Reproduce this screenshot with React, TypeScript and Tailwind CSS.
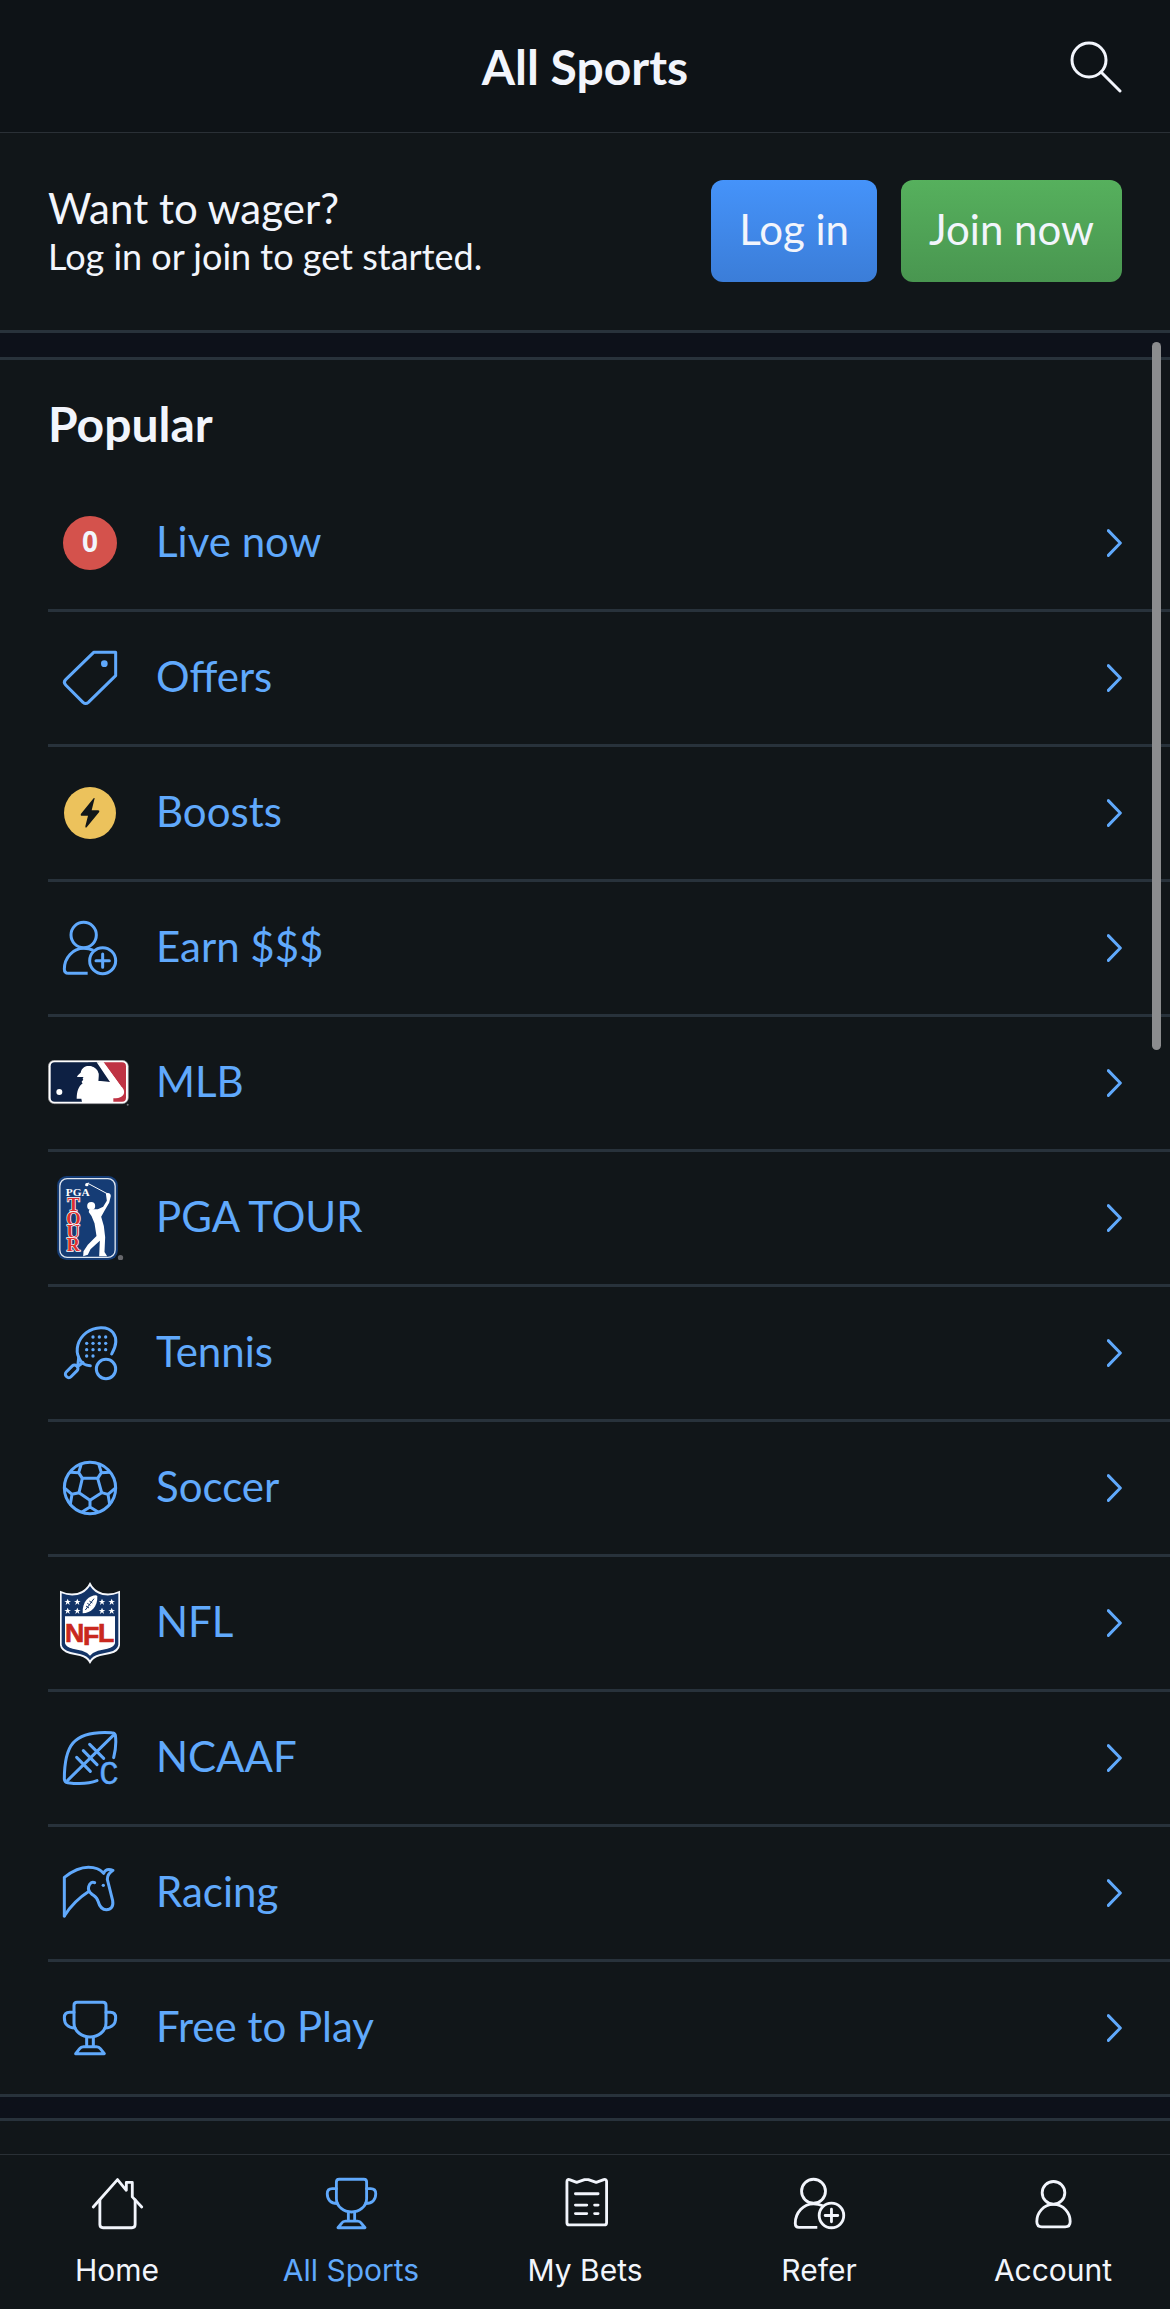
import type { ReactNode } from 'react'

type IconProps = { className?: string }

function LineIcon({ className = 'size-[54px]', children }: IconProps & { children: ReactNode }) {
  return (
    <svg
      viewBox="0 0 162 162"
      className={`overflow-visible ${className}`}
      fill="none"
      stroke="currentColor"
      strokeWidth="9"
      strokeLinecap="round"
      strokeLinejoin="round"
      aria-hidden="true"
    >
      {children}
    </svg>
  )
}

function LiveBadge() {
  return (
    <span className="flex size-[54px] items-center justify-center rounded-full bg-[#d4524c] pb-1 font-['Open_Sans',sans-serif] text-[28px] leading-none font-bold text-[#f2f5fc]">
      0
    </span>
  )
}

function TagIcon() {
  return (
    <LineIcon>
      <path d="M92 4H158V74L76 154Q68 161 60 154L8 102Q0 94 8 86Z" />
      <circle cx="124" cy="38" r="10" fill="currentColor" stroke="none" />
    </LineIcon>
  )
}

function BoostIcon() {
  return (
    <svg viewBox="0 0 162 162" className="size-[54px]" aria-hidden="true">
      <circle cx="81" cy="81" r="78" fill="#ecc25c" />
      <path d="M95 37Q93 35 90 39L54 83Q51 89 57 89H75L67 121Q67 127 71 124L108 79Q111 73 105 73H86Z" fill="#111619" />
    </svg>
  )
}

function ReferIcon({ className }: IconProps) {
  return (
    <LineIcon className={className}>
      <circle cx="62" cy="42" r="38" />
      <path d="M74 157H16Q4 157 4 144C4 110 30 82 62 82Q78 82 91 88" strokeLinecap="butt" />
      <circle cx="119" cy="119" r="39" />
      <path d="M119 99V139M99 119H139" />
    </LineIcon>
  )
}

function MlbLogo() {
  return (
    <svg viewBox="0 0 252 138" className="h-[46px] w-[84px]" aria-hidden="true">
      <rect x="1" y="1" width="240" height="130" rx="18" fill="#fff" stroke="#8b8b90" strokeWidth="2" />
      <path d="M20 7H160V125H20Q8 125 8 113V19Q8 7 20 7Z" fill="#0d2043" />
      <path d="M160 7H222Q234 7 234 19V113Q234 125 222 125H160Z" fill="#bf3344" />
      <path
        d="M146 7H166L218 78C231 88 231 102 222 109C216 114 206 115 196 115V126H102L100 116H86C86 95 92 78 104 70C99 67 101 62 106 60C103 56 104 54 107 52C100 49 93 52 87 51C89 43 95 42 98 38C101 22 114 17 125 18C142 20 151 31 152 44L151 63C164 60 178 61 188 67Z"
        fill="#fff"
      />
      <path d="M152 7L188 66L151 62L152 40L120 8Z" fill="#0d2043" />
      <path d="M125 18C142 20 151 31 152 44L151 64H110V22Z" fill="#fff" />
      <path d="M146 7H167L219 79L196 92L186 66Z" fill="#fff" />
      <circle cx="34" cy="96" r="9" fill="#fff" />
      <circle cx="239" cy="134" r="3" fill="#77777c" />
    </svg>
  )
}

function PgaLogo() {
  return (
    <svg viewBox="0 0 200 252" className="h-[84px] w-[67px]" aria-hidden="true">
      <rect width="182" height="252" rx="28" fill="#153c75" />
      <rect x="8" y="8" width="166" height="236" rx="22" fill="none" stroke="#dfe6f0" strokeWidth="4" />
      <text x="26" y="59" fontFamily="Liberation Serif, serif" fontWeight="700" fontSize="34" fill="#fff">
        PGA
      </text>
      <text
        fontFamily="Liberation Serif, serif"
        fontWeight="700"
        fontSize="56"
        fill="#dc3030"
        stroke="#fff"
        strokeWidth="4"
        paintOrder="stroke"
        x="30 27 28 28"
        y="106 146 186 226"
      >
        TOUR
      </text>
      <path d="M86 28L94 20M92 22L152 54" stroke="#fff" strokeWidth="3" />
      <circle cx="89" cy="26" r="5" fill="#fff" />
      <path
        d="M146 52Q160 48 161 60L156 80L142 104L132 122L140 150L144 184L142 228L150 241H126L128 194L100 220L92 236L78 241L79 226L92 206L118 180L112 142L103 120L95 109Q94 99 104 100L122 100L138 92L149 74Z"
        fill="#fff"
      />
      <circle cx="102" cy="90" r="12" fill="#fff" />
      <circle cx="190" cy="245" r="8" fill="#66666a" />
    </svg>
  )
}

const racketDots = [
  [90, 33], [109, 33], [128, 33],
  [71, 52], [90, 52], [109, 52], [128, 52],
  [71, 71], [90, 71], [109, 71], [128, 71],
  [71, 90], [90, 90],
]

function TennisIcon() {
  return (
    <LineIcon>
      <path d="M146 84C160 60 162 36 150 20C134 -2 94 2 70 20C44 40 36 72 48 96C54 110 66 119 82 119" />
      <path d="M47 96L44 122M44 122L60 110" />
      <rect x="-22" y="-10" width="44" height="20" rx="9" transform="translate(26 136) rotate(-45)" />
      <circle cx="129" cy="129" r="29" />
      {racketDots.map(([x, y]) => (
        <circle key={`${x}-${y}`} cx={x} cy={y} r="5" fill="currentColor" stroke="none" />
      ))}
    </LineIcon>
  )
}

function SoccerIcon() {
  return (
    <LineIcon>
      <circle cx="81" cy="81" r="77" />
      <path d="M58 52H104L116 95L81 118L48 95Z" />
      <path d="M58 52L47 35M47 35L54 12M47 35L22 34M104 52L115 35M115 35L108 12M115 35L140 34" />
      <path d="M48 95L27 100M27 100L6 82M27 100L22 130M116 95L135 100M135 100L156 82M135 100L140 130" />
      <path d="M81 118V138M81 138L58 152M81 138L104 152" />
    </LineIcon>
  )
}

const star = 'M0 -10L3 -3L10 -3L4 1L6 9L0 4L-6 9L-4 1L-10 -3L-3 -3Z'
const starSpots = [[23, 60], [52, 60], [126, 60], [155, 60], [23, 87], [52, 87], [126, 87], [155, 87]]

function NflLogo() {
  return (
    <svg viewBox="0 0 180 246" className="h-[82px] w-[60px]" aria-hidden="true">
      <path
        d="M90 0Q102 26 128 33Q156 38 180 26V190Q178 210 150 216L120 222Q98 228 90 246Q82 228 60 222L30 216Q2 208 0 190V26Q24 38 52 33Q78 26 90 0Z"
        fill="#f5f7fb"
      />
      <path
        d="M90 12Q104 34 128 39Q154 43 175 34V188Q173 204 148 210L118 217Q98 222 90 235Q82 222 62 217L32 210Q7 203 5 188V34Q26 43 52 39Q76 34 90 12Z"
        fill="#133467"
      />
      <path d="M15 103H165V184Q162 196 142 200L114 206Q98 211 90 221Q82 211 66 206L38 200Q18 196 15 184Z" fill="#fff" />
      {starSpots.map(([x, y]) => (
        <path key={`${x}-${y}`} d={star} fill="#fff" transform={`translate(${x} ${y})`} />
      ))}
      <path d="M108 40C88 40 66 58 68 94C92 94 114 74 112 42Z" fill="#fff" />
      <path d="M76 84L102 50M82 64L91 70M88 57L97 63M78 72L87 78" stroke="#133467" strokeWidth="3" />
      <text
        x="15 69 114"
        y="180 190 180"
        fontFamily="Liberation Sans, sans-serif"
        fontWeight="700"
        fontSize="80"
        fill="#c9281f"
        stroke="#c9281f"
        strokeWidth="2"
      >
        NFL
      </text>
    </svg>
  )
}

function NcaafIcon() {
  return (
    <LineIcon>
      <path d="M152 80C158 56 160 32 157 12Q154 5 146 5C100 2 54 8 30 36C8 62 4 100 4 144Q5 154 14 155C50 160 84 156 102 149" />
      <path d="M14 148L150 14M80 40L122 82M61 59L102 101M41 79L82 121" />
      <text
        x="138"
        y="160"
        textAnchor="middle"
        fontFamily="Liberation Mono, monospace"
        fontSize="98"
        fill="currentColor"
        strokeWidth="1"
      >
        C
      </text>
    </LineIcon>
  )
}

function HorseIcon() {
  return (
    <LineIcon>
      <path d="M4 150V34C30 14 56 4 76 4C96 4 112 10 122 22C126 12 136 8 150 13C139 20 133 26 133 40L149 104C152 122 144 131 130 131C116 131 110 122 106 108C102 92 96 92 86 84C78 78 75 70 77 62C80 50 88 46 95 50" />
      <path d="M78 76C50 94 24 118 4 150" />
      <circle cx="121" cy="58" r="5" fill="currentColor" stroke="none" />
    </LineIcon>
  )
}

function TrophyIcon({ className }: IconProps) {
  return (
    <LineIcon className={className}>
      <path d="M42 4H120Q129 4 129 13V66C129 92 104 108 81 108C58 108 33 92 33 66V13Q33 4 42 4Z" />
      <path d="M33 34H20Q4 34 4 50C4 68 14 81 36 81M129 34H142Q158 34 158 50C158 68 148 81 126 81" />
      <path d="M71 108V136M91 108V136M38 158L50 143Q54 137 62 137H100Q108 137 112 143L124 158Z" />
    </LineIcon>
  )
}

function HomeIcon({ className }: IconProps) {
  return (
    <LineIcon className={className}>
      <path d="M4 92L81 5L109 39V14H128V60L158 92" />
      <path d="M25 70V148Q25 158 35 158H127Q137 158 137 148V70" />
    </LineIcon>
  )
}

function ReceiptIcon({ className }: IconProps) {
  return (
    <LineIcon className={className}>
      <path d="M22 12Q22 2 32 6L53 14L78 5L90 5L115 14L139 5Q148 3 148 12V142Q148 149 141 149H29Q22 149 22 142Z" />
      <path d="M49 50H121M49 86H85M110 86H121M49 113H85M110 113H121" />
    </LineIcon>
  )
}

function AccountIcon({ className }: IconProps) {
  return (
    <LineIcon className={className}>
      <circle cx="81" cy="47" r="36" />
      <path d="M81 84C48 84 28 112 28 138Q28 155 44 155H118Q134 155 134 138C134 112 114 84 81 84Z" />
    </LineIcon>
  )
}

function Chevron() {
  return (
    <svg viewBox="0 0 45 84" className="h-7 w-[15px] shrink-0" fill="none" stroke="currentColor" strokeWidth="9" strokeLinecap="round" strokeLinejoin="round" aria-hidden="true">
      <path d="M4 5L40 42L4 79" />
    </svg>
  )
}

const popular = [
  { label: 'Live now', icon: <LiveBadge /> },
  { label: 'Offers', icon: <TagIcon /> },
  { label: 'Boosts', icon: <BoostIcon /> },
  { label: 'Earn $$$', icon: <ReferIcon /> },
  { label: 'MLB', icon: <MlbLogo /> },
  { label: 'PGA TOUR', icon: <PgaLogo /> },
  { label: 'Tennis', icon: <TennisIcon /> },
  { label: 'Soccer', icon: <SoccerIcon /> },
  { label: 'NFL', icon: <NflLogo /> },
  { label: 'NCAAF', icon: <NcaafIcon /> },
  { label: 'Racing', icon: <HorseIcon /> },
  { label: 'Free to Play', icon: <TrophyIcon /> },
]

const tabs = [
  { label: 'Home', Icon: HomeIcon },
  { label: 'All Sports', Icon: TrophyIcon, active: true },
  { label: 'My Bets', Icon: ReceiptIcon },
  { label: 'Refer', Icon: ReferIcon },
  { label: 'Account', Icon: AccountIcon },
]

export default function App() {
  return (
    <div className="relative flex min-h-screen flex-col bg-[#111619] font-[Lato,sans-serif] text-[#f2f5fc]">
      <header className="grid h-[133px] grid-cols-[1fr_auto_1fr] items-center border-b border-[#2a3036] bg-[#0e1317] px-12 pt-0.5">
        <h1 className="col-start-2 text-[48px] leading-[54px] font-bold">All Sports</h1>
        <button type="button" aria-label="Search" className="justify-self-end">
          <svg viewBox="0 0 52 52" className="size-[52px]" fill="none" stroke="currentColor" strokeWidth="3" strokeLinecap="round" aria-hidden="true">
            <circle cx="19" cy="19" r="17" />
            <path d="M31 31L50 50" />
          </svg>
        </button>
      </header>

      <section className="flex items-center justify-between border-b-3 border-[#28323b] px-12 pt-[47px] pb-12">
        <div>
          <p className="text-[42px] leading-[50px]">Want to wager?</p>
          <p className="text-[36px] leading-[46px]">Log in or join to get started.</p>
        </div>
        <div className="flex gap-6 text-[42px] leading-[50px]">
          <button type="button" className="h-[102px] rounded-xl bg-linear-to-b from-[#4593fa] to-[#3b7dd8] px-7 pb-1">
            Log in
          </button>
          <button type="button" className="h-[102px] rounded-xl bg-linear-to-b from-[#56b05d] to-[#499650] px-7 pb-1">
            Join now
          </button>
        </div>
      </section>

      <div className="h-6 bg-[#0d111a]" />

      <section className="border-t-3 border-b-3 border-[#28323b]">
        <h2 className="px-12 pt-[37px] pb-[26px] text-[48px] leading-[54px] font-bold">Popular</h2>
        <ul className="divide-y-3 divide-[#28323b] pl-12 text-[#60a9fc]">
          {popular.map((item) => (
            <li key={item.label}>
              <a href="#" className="flex h-33 items-center pr-12">
                <span className="flex w-[84px] shrink-0 justify-center">{item.icon}</span>
                <span className="ml-6 flex-1 pb-1 text-[42px] leading-[50px]">{item.label}</span>
                <Chevron />
              </a>
            </li>
          ))}
        </ul>
      </section>

      <div className="h-[21px] bg-[#0d111a]" />
      <section className="flex-1 border-t-3 border-[#28323b]" />

      <nav className="sticky bottom-0 grid h-[155px] grid-cols-5 border-t border-[#2a3036] bg-[#111619] font-[Inter,sans-serif]">
        {tabs.map(({ label, Icon, active }) => (
          <a
            key={label}
            href="#"
            aria-current={active ? 'page' : undefined}
            className={`flex flex-col items-center pt-[23px] ${active ? 'text-[#60a9fc]' : ''}`}
          >
            <Icon className="size-[51px]" />
            <span className="mt-[23px] text-[30px] leading-9">{label}</span>
          </a>
        ))}
      </nav>

      <div className="absolute top-[342px] right-[9px] h-[708px] w-[9px] rounded-full bg-[#8b8c8e]" />
    </div>
  )
}
